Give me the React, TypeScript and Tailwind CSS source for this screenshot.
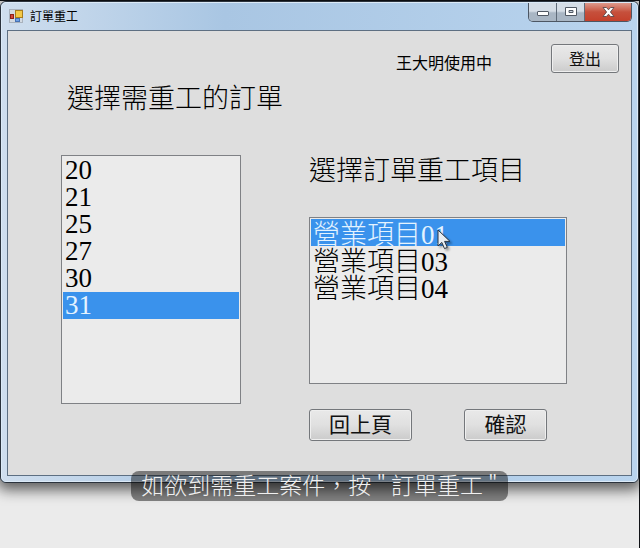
import { useState } from "react";
import type { ReactNode } from "react";

const orders = ["20", "21", "25", "27", "30", "31"];
const items = ["營業項目01", "營業項目03", "營業項目04"];

interface ListBoxProps {
  label: string;
  options: string[];
  value: string;
  onChange: (value: string) => void;
  className: string;
}

function ListBox({ label, options, value, onChange, className }: ListBoxProps) {
  return (
    <select
      size={6}
      aria-label={label}
      value={value}
      onChange={(e) => onChange(e.target.value)}
      className={`block w-full appearance-none overflow-hidden rounded-none border border-[#7f8185] bg-[#ebebeb] p-px font-['Liberation_Serif','Noto_Sans_CJK_TC',serif] text-[27px] font-light text-black outline-none ${className}`}
    >
      {options.map((option) => (
        <option
          key={option}
          value={option}
          className="flex h-[27px] min-h-0 items-center overflow-visible p-0 pl-0.5 font-light checked:bg-[linear-gradient(#3a92ec,#3a92ec)] checked:text-[#e4f3ff]"
        >
          {option}
        </option>
      ))}
    </select>
  );
}

interface FormButtonProps {
  children: ReactNode;
  className: string;
}

function FormButton({ children, className }: FormButtonProps) {
  return (
    <button
      type="button"
      className={`flex items-center justify-center rounded-[3px] border border-[#74777b] bg-linear-to-b from-[#e9e9e9] from-0% via-[#e0e0e0] via-50% to-[#cbcbcb] pb-0.5 text-[#111] shadow-[inset_0_0_0_1px_#efefef] ${className}`}
    >
      {children}
    </button>
  );
}

function AppIcon() {
  return (
    <svg width="14" height="14" viewBox="0 0 14 14" aria-hidden="true">
      <rect x="0.5" y="0.5" width="13" height="13" fill="#d3dae2" stroke="#a9b2bd" />
      <rect x="6.5" y="1.5" width="7" height="7" fill="#f3c846" stroke="#a87c1c" />
      <rect x="1.5" y="5.5" width="3" height="4" fill="#d4463a" stroke="#8e2119" />
      <rect x="6.5" y="9.5" width="4" height="3" fill="#6fa1e6" stroke="#4672b4" />
    </svg>
  );
}

function WindowControls() {
  return (
    <div className="flex h-[19px] overflow-hidden rounded-b-[5px] border border-t-0 border-[#4c5663]">
      <button
        type="button"
        aria-label="最小化"
        className="flex w-7 items-center justify-center border-r border-[#5f6b79] bg-linear-to-b from-[#d5dde6] from-45% to-[#a9b6c4] to-55%"
      >
        <svg width="12" height="14" viewBox="0 0 12 14">
          <rect x="0.5" y="6.5" width="11" height="4" rx="0.5" fill="#fff" stroke="#515964" />
        </svg>
      </button>
      <button
        type="button"
        aria-label="最大化"
        className="flex w-7 items-center justify-center border-r border-[#5f6b79] bg-linear-to-b from-[#d5dde6] from-45% to-[#a9b6c4] to-55%"
      >
        <svg width="12" height="10" viewBox="0 0 12 10">
          <path
            d="M.5.5h11v8H.5zM4 3.5h4v2H4z"
            fill="#fff"
            fillRule="evenodd"
            stroke="#515964"
          />
        </svg>
      </button>
      <button
        type="button"
        aria-label="關閉"
        className="flex w-[46px] items-center justify-center bg-linear-to-b from-[#dc998c] from-0% via-[#c6503c] via-50% to-[#c4402b]"
      >
        <svg width="13" height="10" viewBox="0 0 13 10">
          <path
            d="M1 .5h3.4l2.1 2.3L8.6.5H12L8.4 5l3.6 4.5H8.6L6.5 7.2 4.4 9.5H1L4.6 5z"
            fill="#fff"
            stroke="#5a4a4d"
            strokeWidth="0.9"
          />
        </svg>
      </button>
    </div>
  );
}

function Cursor() {
  return (
    <svg
      width="15"
      height="22"
      viewBox="0 0 15 22"
      aria-hidden="true"
      className="pointer-events-none absolute top-3 left-32 drop-shadow-[2px_2px_1px_rgba(0,0,0,0.35)]"
    >
      <path
        d="M1 1v16l3.8-3.6 2.7 6.2 2.8-1.2-2.7-6H13z"
        fill="#e8edf2"
        stroke="#2a3440"
      />
    </svg>
  );
}

export default function App() {
  const [order, setOrder] = useState("31");
  const [item, setItem] = useState("營業項目01");

  return (
    <div
      lang="zh-Hant"
      className="min-h-screen border-t border-r border-[#101216] bg-[#ebebeb] font-['Noto_Sans_CJK_TC',sans-serif] text-black"
    >
      <div className="rounded-md border border-[#2b333d] bg-[#b3cee9] shadow-[0_4px_14px_3px_rgba(0,0,0,0.6)]">
        <div className="rounded-[5px] border border-[#dceaf7] bg-linear-to-r from-[#cfdeee] via-[#a9c6e3] via-35% to-[#b9d4ee] px-[5px] pb-[5px]">
          <header className="flex h-[27px] items-start justify-between">
            <div className="flex items-center gap-[7px] pt-[3px] pl-0.5">
              <AppIcon />
              <h1 className="text-xs leading-5">訂單重工</h1>
            </div>
            <WindowControls />
          </header>

          <main className="border border-[#5d6f82] bg-[#dedede] pb-[34px]">
            <div className="flex items-center justify-end gap-[59px] pt-[13px] pr-3">
              <p className="pt-1.5 text-base leading-5">王大明使用中</p>
              <FormButton className="h-[29px] w-[68px] text-base">登出</FormButton>
            </div>

            <div className="grid grid-cols-[minmax(0,180fr)_minmax(0,258fr)] gap-[68px] pr-16 pl-[53px]">
              <section className="pt-2">
                <h2 className="mb-[42px] pl-1.5 text-[27px] leading-8 font-light whitespace-nowrap">
                  選擇需重工的訂單
                </h2>
                <ListBox
                  label="選擇需重工的訂單"
                  options={orders}
                  value={order}
                  onChange={setOrder}
                  className="h-[249px]"
                />
              </section>

              <section className="pt-20">
                <h2 className="mb-8 text-[27px] leading-8 font-light whitespace-nowrap">
                  選擇訂單重工項目
                </h2>
                <div className="relative">
                  <ListBox
                    label="選擇訂單重工項目"
                    options={items}
                    value={item}
                    onChange={setItem}
                    className="h-[167px]"
                  />
                  <Cursor />
                </div>
                <div className="mt-[25px] flex gap-[52px]">
                  <FormButton className="h-8 w-[103px] text-[21px]">回上頁</FormButton>
                  <FormButton className="h-8 w-[83px] text-[21px]">確認</FormButton>
                </div>
              </section>
            </div>
          </main>
        </div>
      </div>

      <div className="relative -mt-3 flex justify-center">
        <p className="rounded-lg bg-black/45 px-2.5 pb-1 text-[23px] leading-[26px] font-light whitespace-pre text-[#f0f0f0]">
          如欲到需重工案件，按 " 訂單重工 "
        </p>
      </div>
    </div>
  );
}
